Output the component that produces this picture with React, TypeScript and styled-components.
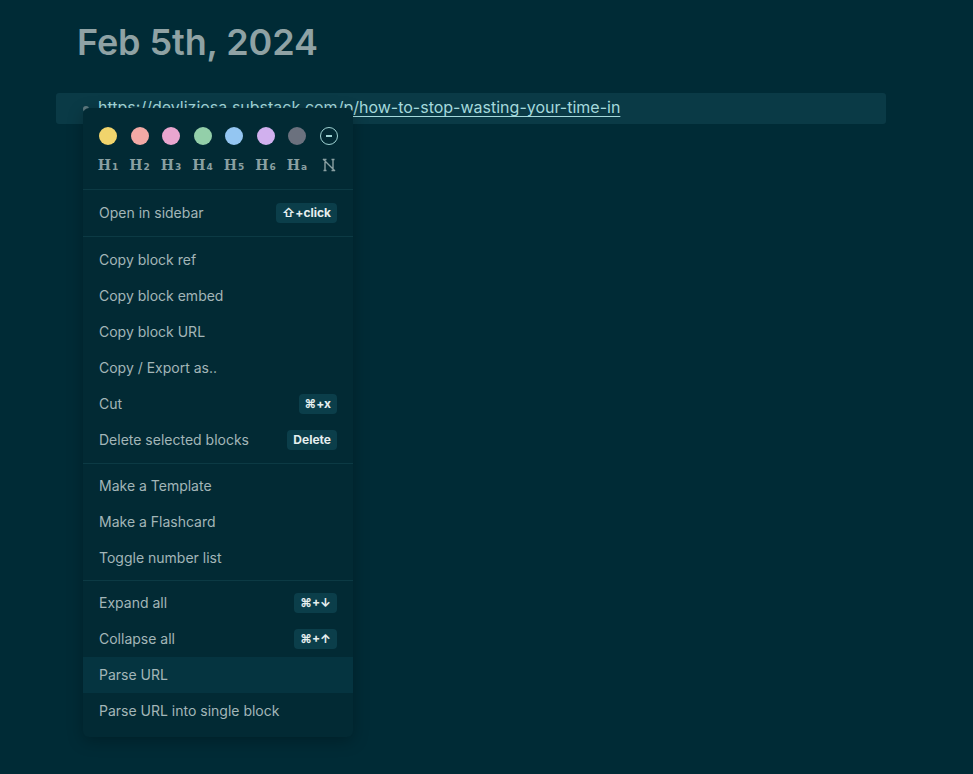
import React from 'react';
import styled, { createGlobalStyle } from 'styled-components';

const GlobalStyle = createGlobalStyle`
  html, body {
    margin: 0;
    padding: 0;
    background: #002b36;
    font-family: Inter, "Liberation Sans", sans-serif;
  }
`;

const Page = styled.div`
  position: relative;
  min-height: 774px;
  padding: 22px 0 0 56px;
  box-sizing: border-box;
`;

const Title = styled.h1`
  margin: 0 0 0 21px;
  font-size: 36px;
  font-weight: 600;
  line-height: 40px;
  color: #8fa2a4;
  letter-spacing: -0.1px;
`;

const BlockRow = styled.div`
  margin-top: 31px;
  width: 830px;
  height: 31px;
  display: flex;
  align-items: center;
  background: #0a3a46;
  border-radius: 3px;
  padding-bottom: 3px;
  box-sizing: border-box;
`;

const Bullet = styled.span`
  width: 6px;
  height: 6px;
  border-radius: 50%;
  background: #5f7a80;
  margin: 3px 9px 0 27px;
`;

const Link = styled.a`
  color: #a4d9dc;
  font-size: 16px;
  text-decoration: underline;
  text-underline-offset: 3px;
  text-decoration-thickness: 1px;
`;

const Menu = styled.div`
  position: absolute;
  left: 83px;
  top: 108px;
  width: 270px;
  padding: 9px 0 4px;
  background: #022a34;
  border-radius: 6px;
  box-shadow: 0 4px 16px rgba(0, 0, 0, 0.25);
`;

const Swatches = styled.div`
  display: grid;
  grid-template-columns: repeat(8, 18px);
  column-gap: 13.5px;
  padding: 10px 16px 0 16px;
  justify-items: center;
`;

const Dot = styled.span<{ $c: string }>`
  width: 18px;
  height: 18px;
  border-radius: 50%;
  background: ${p => p.$c};
`;

const ClearDot = styled.span`
  width: 16px;
  height: 16px;
  border-radius: 50%;
  border: 1.5px solid #9fd3d3;
  display: flex;
  align-items: center;
  justify-content: center;
  &::after {
    content: '';
    width: 6px;
    height: 1.5px;
    background: #9fd3d3;
  }
`;

const HeadLabel = styled.span`
  margin-top: 12px;
  font-family: "DejaVu Serif", "Liberation Serif", serif;
  font-size: 14px;
  font-weight: 700;
  color: #8aa0a2;
  line-height: 16px;
  white-space: nowrap;
  sub {
    font-family: "DejaVu Sans", sans-serif;
    font-size: 9px;
    vertical-align: baseline;
    margin-left: 1px;
  }
`;

const Divider = styled.div`
  height: 1px;
  background: #0c3a44;
  margin: 14px 0 0;
`;

const Group = styled.div<{ $pad?: number }>`
  padding: ${p => p.$pad ?? 4}px 0;
`;

const Item = styled.div<{ $active?: boolean }>`
  height: 36px;
  box-sizing: border-box;
  display: flex;
  align-items: center;
  justify-content: space-between;
  padding: 0 16px;
  font-size: 14px;
  line-height: 20px;
  color: #a3b6b8;
  background: ${p => (p.$active ? '#053440' : 'transparent')};
`;

const Kbd = styled.span`
  background: #0b3e4a;
  color: #e6efef;
  font-size: 12px;
  font-weight: 700;
  padding: 2px 6px;
  border-radius: 4px;
  line-height: 16px;
`;

const Sep = styled.div`
  height: 1px;
  background: #0c3a44;
`;

const colors = ['#f1d46c', '#f2a9a5', '#e9a6cf', '#93cfa9', '#94c6f2', '#d1b0ee', '#6b717e'];

const HeadingOff = () => (
  <svg width="16" height="16" viewBox="0 0 16 16" fill="none" stroke="#8aa0a2" strokeWidth="1.4" style={{ marginTop: 12 }}>
    <path d="M4 2.5v11M12 2.5v11M2.5 2.5h3M10.5 2.5h3M2.5 13.5h3M10.5 13.5h3M2 2l12 12" />
  </svg>
);

export default function App() {
  return (
    <>
      <GlobalStyle />
      <Page>
        <Title>Feb 5th, 2024</Title>
        <BlockRow>
          <Bullet />
          <Link>https://devliziosa.substack.com/p/how-to-stop-wasting-your-time-in</Link>
        </BlockRow>
        <Menu>
          <Swatches>
            {colors.map(c => (
              <Dot key={c} $c={c} />
            ))}
            <ClearDot />
            {['1', '2', '3', '4', '5', '6', 'a'].map(n => (
              <HeadLabel key={n}>
                H<sub>{n}</sub>
              </HeadLabel>
            ))}
            <HeadingOff />
          </Swatches>
          <Divider />
          <Group $pad={5}>
            <Item>
              Open in sidebar <Kbd>⇧+click</Kbd>
            </Item>
          </Group>
          <Sep />
          <Group $pad={5}>
            <Item>Copy block ref</Item>
            <Item>Copy block embed</Item>
            <Item>Copy block URL</Item>
            <Item>Copy / Export as..</Item>
            <Item>
              Cut <Kbd>⌘+x</Kbd>
            </Item>
            <Item>
              Delete selected blocks <Kbd>Delete</Kbd>
            </Item>
          </Group>
          <Sep />
          <Group>
            <Item>Make a Template</Item>
            <Item>Make a Flashcard</Item>
            <Item>Toggle number list</Item>
          </Group>
          <Sep />
          <Group>
            <Item>
              Expand all <Kbd>⌘+↓</Kbd>
            </Item>
            <Item>
              Collapse all <Kbd>⌘+↑</Kbd>
            </Item>
            <Item $active>Parse URL</Item>
            <Item>Parse URL into single block</Item>
          </Group>
        </Menu>
      </Page>
    </>
  );
}
